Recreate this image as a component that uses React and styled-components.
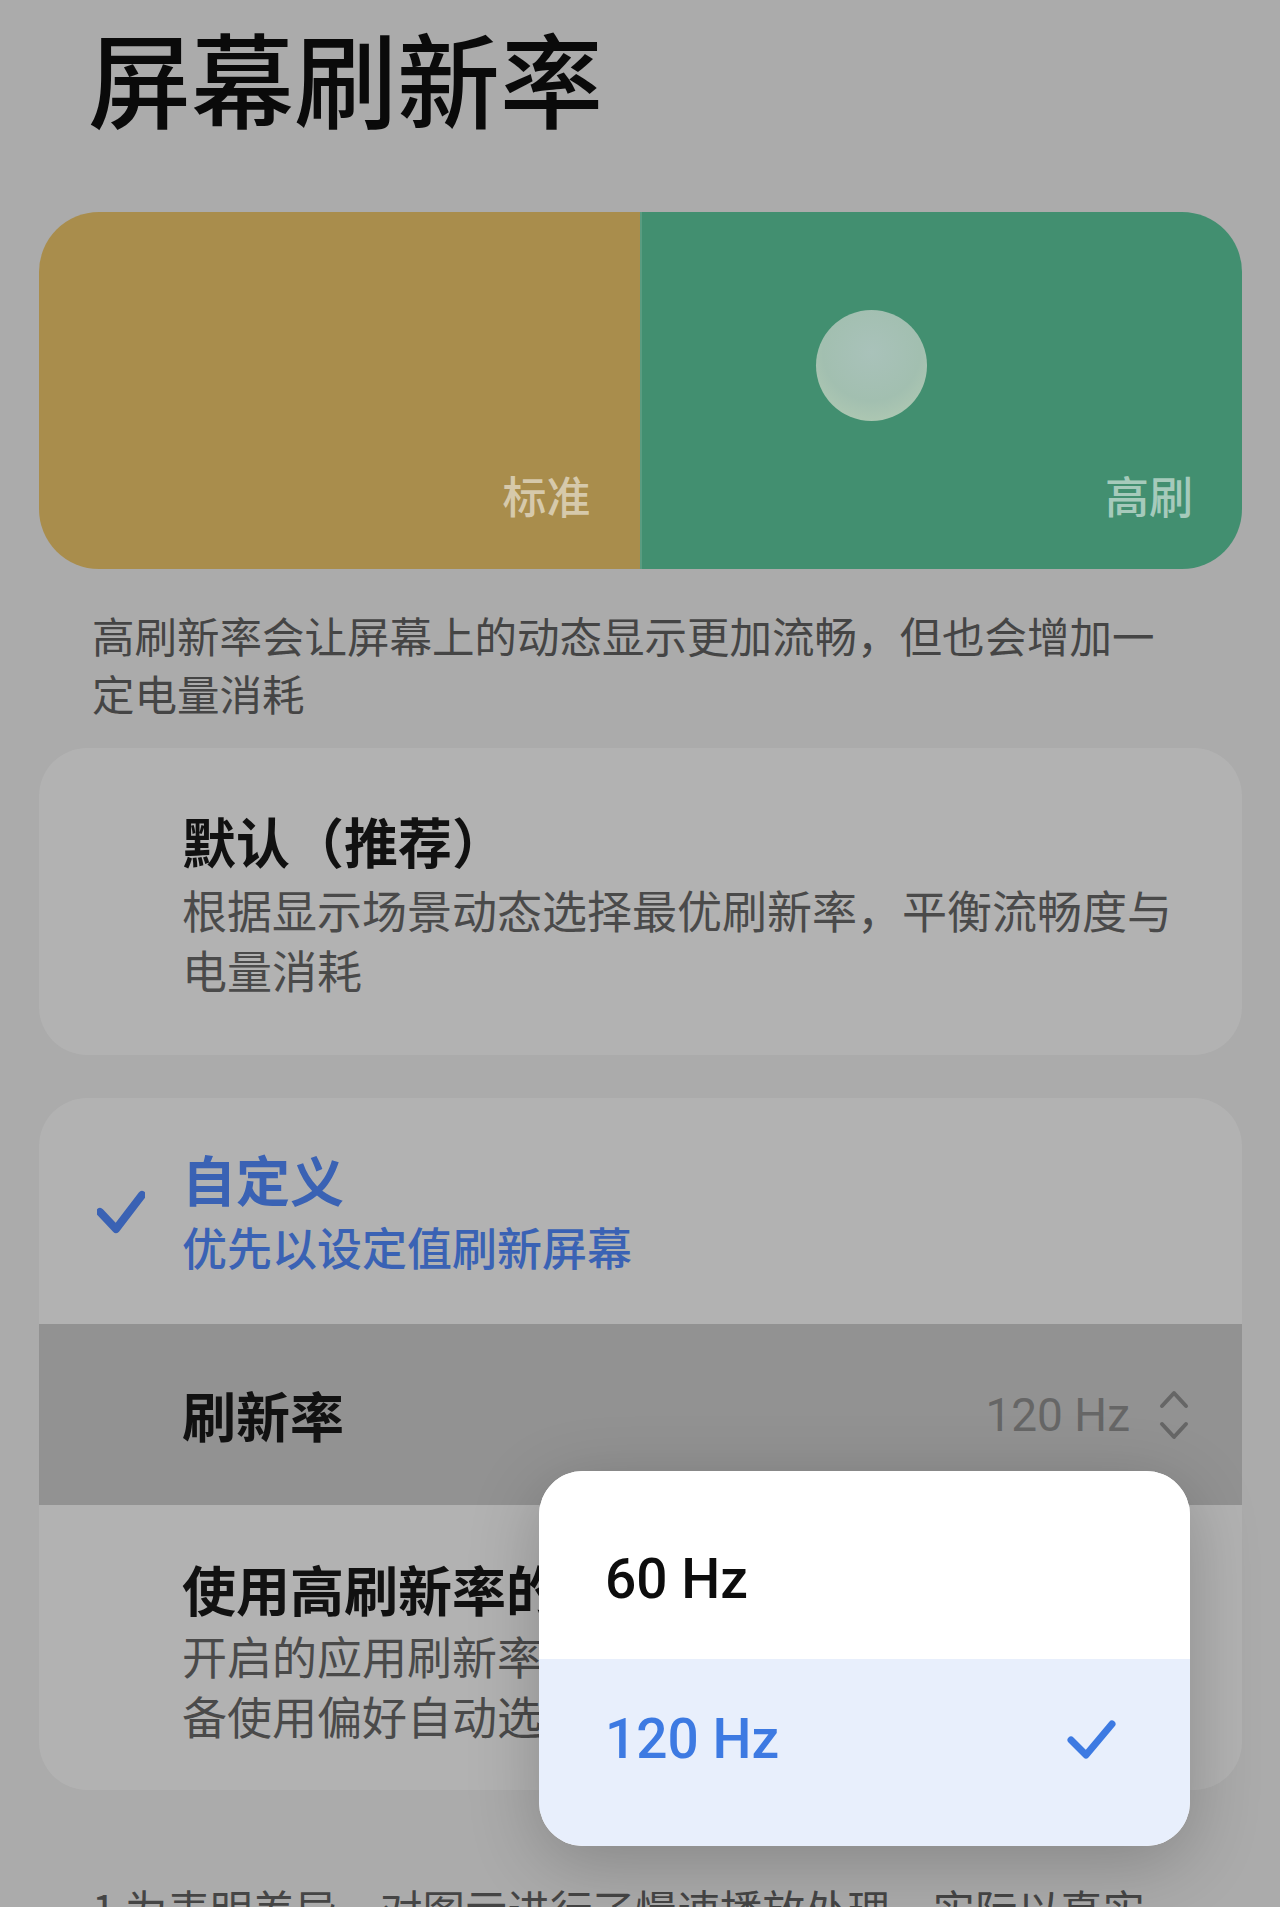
import React from "react";
import styled, { createGlobalStyle } from "styled-components";

const GlobalStyle = createGlobalStyle`
  html, body {
    margin: 0;
    padding: 0;
    background: #ababab;
  }
  body {
    font-family: "Noto Sans CJK SC", "Noto Sans", sans-serif;
  }
  * {
    box-sizing: border-box;
  }
`;

const Page = styled.div`
  position: relative;
  width: 1280px;
  height: 1907px;
  overflow: hidden;
  background: #ababab;
  padding-top: 16px;
`;

const Title = styled.h1`
  margin: 0 0 0 88px;
  font-size: 103px;
  line-height: 122px;
  font-weight: 500;
  color: #0a0a0a;
`;

const Slider = styled.div`
  margin: 74px 38px 0 39px;
  height: 357px;
  border-radius: 60px;
  overflow: hidden;
  display: flex;
`;

const Half = styled.div`
  position: relative;
  flex: 1;
  background: ${(p) => p.$color};
  display: flex;
  align-items: flex-end;
  justify-content: flex-end;
  padding: 0 49px 48px 0;
  border-left: ${(p) => (p.$divider ? "2px solid rgba(255,255,255,0.12)" : "none")};
`;

const HalfLabel = styled.span`
  font-size: 44px;
  line-height: 52px;
  font-weight: 500;
  color: rgba(255, 255, 255, 0.55);
`;

const Knob = styled.div`
  position: absolute;
  left: 174px;
  top: 98px;
  width: 111px;
  height: 111px;
  border-radius: 50%;
  background: radial-gradient(circle at 50% 38%, #a9c2ba 0%, #a2bfb0 55%, #b6ceb4 100%);
`;

const Note = styled.p`
  margin: ${(p) => p.$top}px 108px 0 92px;
  font-size: 42.5px;
  line-height: 58px;
  color: #454545;
`;

const Card = styled.div`
  margin: ${(p) => p.$top}px 38px 0 39px;
  background: #b2b2b2;
  border-radius: 48px;
  overflow: hidden;
`;

const Option = styled.div`
  display: flex;
  align-items: center;
  padding: ${(p) => p.$pt}px 50px ${(p) => p.$pb}px 0;
`;

const Gutter = styled.div`
  width: 143px;
  flex-shrink: 0;
  display: flex;
  align-items: center;
  padding-left: 58px;
`;

const OptionText = styled.div`
  flex: 1;
  min-width: 0;
`;

const OptionTitle = styled.div`
  font-size: 54px;
  line-height: 64px;
  font-weight: 700;
  color: ${(p) => (p.$active ? "#3a62b4" : "#111")};
`;

const OptionDesc = styled.div`
  margin-top: ${(p) => p.$gap}px;
  font-size: 45px;
  line-height: 60px;
  font-weight: ${(p) => (p.$active ? 500 : 400)};
  color: ${(p) => (p.$active ? "#3a62b4" : "#4a4a4a")};
`;

const PickerRow = styled.div`
  height: 181px;
  background: #929292;
  display: flex;
  align-items: center;
  padding: 0 52px 0 143px;
`;

const PickerLabel = styled.div`
  flex: 1;
  font-size: 54px;
  line-height: 64px;
  font-weight: 700;
  color: #111;
`;

const PickerValue = styled.span`
  font-family: Roboto, "Noto Sans CJK SC", sans-serif;
  font-size: 46px;
  color: #666;
`;

const Stepper = styled.svg`
  margin-left: 28px;
  display: block;
`;

const Menu = styled.div`
  position: absolute;
  left: 539px;
  top: 1471px;
  width: 651px;
  border-radius: 44px;
  overflow: hidden;
  background: #fff;
  box-shadow: 0 16px 70px rgba(0, 0, 0, 0.22);
`;

const MenuItem = styled.div`
  display: flex;
  align-items: center;
  justify-content: space-between;
  height: ${(p) => 160 + p.$pt + p.$pb}px;
  padding: ${(p) => p.$pt}px 74px ${(p) => p.$pb}px 66px;
  background: ${(p) => (p.$selected ? "#e8effc" : "#fff")};
`;

const MenuText = styled.span`
  font-family: Roboto, "Noto Sans CJK SC", sans-serif;
  font-size: 55px;
  font-weight: 500;
  color: ${(p) => (p.$selected ? "#3d7ae2" : "#0d0d0d")};
`;

const Check = ({ color, width, height, points, stroke }) => (
  <svg width={width} height={height} viewBox={`0 0 ${width} ${height}`}>
    <polyline
      points={points}
      fill="none"
      stroke={color}
      strokeWidth={stroke}
      strokeLinecap="round"
      strokeLinejoin="round"
    />
  </svg>
);

const options = [
  { value: "60 Hz", selected: false },
  { value: "120 Hz", selected: true },
];

export default function App() {
  return (
    <Page>
      <GlobalStyle />
      <Title>屏幕刷新率</Title>

      <Slider>
        <Half $color="#a98d4c">
          <HalfLabel>标准</HalfLabel>
        </Half>
        <Half $color="#428f70" $divider>
          <Knob />
          <HalfLabel>高刷</HalfLabel>
        </Half>
      </Slider>

      <Note $top={37}>高刷新率会让屏幕上的动态显示更加流畅，但也会增加一定电量消耗</Note>

      <Card $top={26}>
        <Option $pt={61} $pb={55}>
          <Gutter />
          <OptionText>
            <OptionTitle>默认（推荐）</OptionTitle>
            <OptionDesc $gap={7}>根据显示场景动态选择最优刷新率，平衡流畅度与电量消耗</OptionDesc>
          </OptionText>
        </Option>
      </Card>

      <Card $top={43}>
        <Option $pt={49} $pb={47}>
          <Gutter>
            <Check color="#3a62b4" width={48} height={44} points="3,22 19,39 45,5" stroke={8} />
          </Gutter>
          <OptionText>
            <OptionTitle $active>自定义</OptionTitle>
            <OptionDesc $active $gap={6}>优先以设定值刷新屏幕</OptionDesc>
          </OptionText>
        </Option>

        <PickerRow>
          <PickerLabel>刷新率</PickerLabel>
          <PickerValue>120 Hz</PickerValue>
          <Stepper width="32" height="52" viewBox="0 0 32 52">
            <polyline points="4,17 16,4 28,17" fill="none" stroke="#666" strokeWidth="4" strokeLinecap="round" strokeLinejoin="round" />
            <polyline points="4,35 16,48 28,35" fill="none" stroke="#666" strokeWidth="4" strokeLinecap="round" strokeLinejoin="round" />
          </Stepper>
        </PickerRow>

        <Option $pt={52} $pb={44}>
          <Gutter />
          <OptionText>
            <OptionTitle>使用高刷新率的应用</OptionTitle>
            <OptionDesc $gap={5}>开启的应用刷新率优先使用高刷，其他应用根据设备使用偏好自动选择刷新率</OptionDesc>
          </OptionText>
        </Option>
      </Card>

      <Note $top={89}>1 为表明差异，对图示进行了慢速播放处理，实际以真实使用体验为准</Note>

      <Menu>
        {options.map((o, i) => (
          <MenuItem
            key={o.value}
            $selected={o.selected}
            $pt={i === 0 ? 28 : 0}
            $pb={i === options.length - 1 ? 27 : 0}
          >
            <MenuText $selected={o.selected}>{o.value}</MenuText>
            {o.selected && (
              <Check color="#3d7ae2" width={49} height={39} points="4,20 19,35 45,4" stroke={7} />
            )}
          </MenuItem>
        ))}
      </Menu>
    </Page>
  );
}
